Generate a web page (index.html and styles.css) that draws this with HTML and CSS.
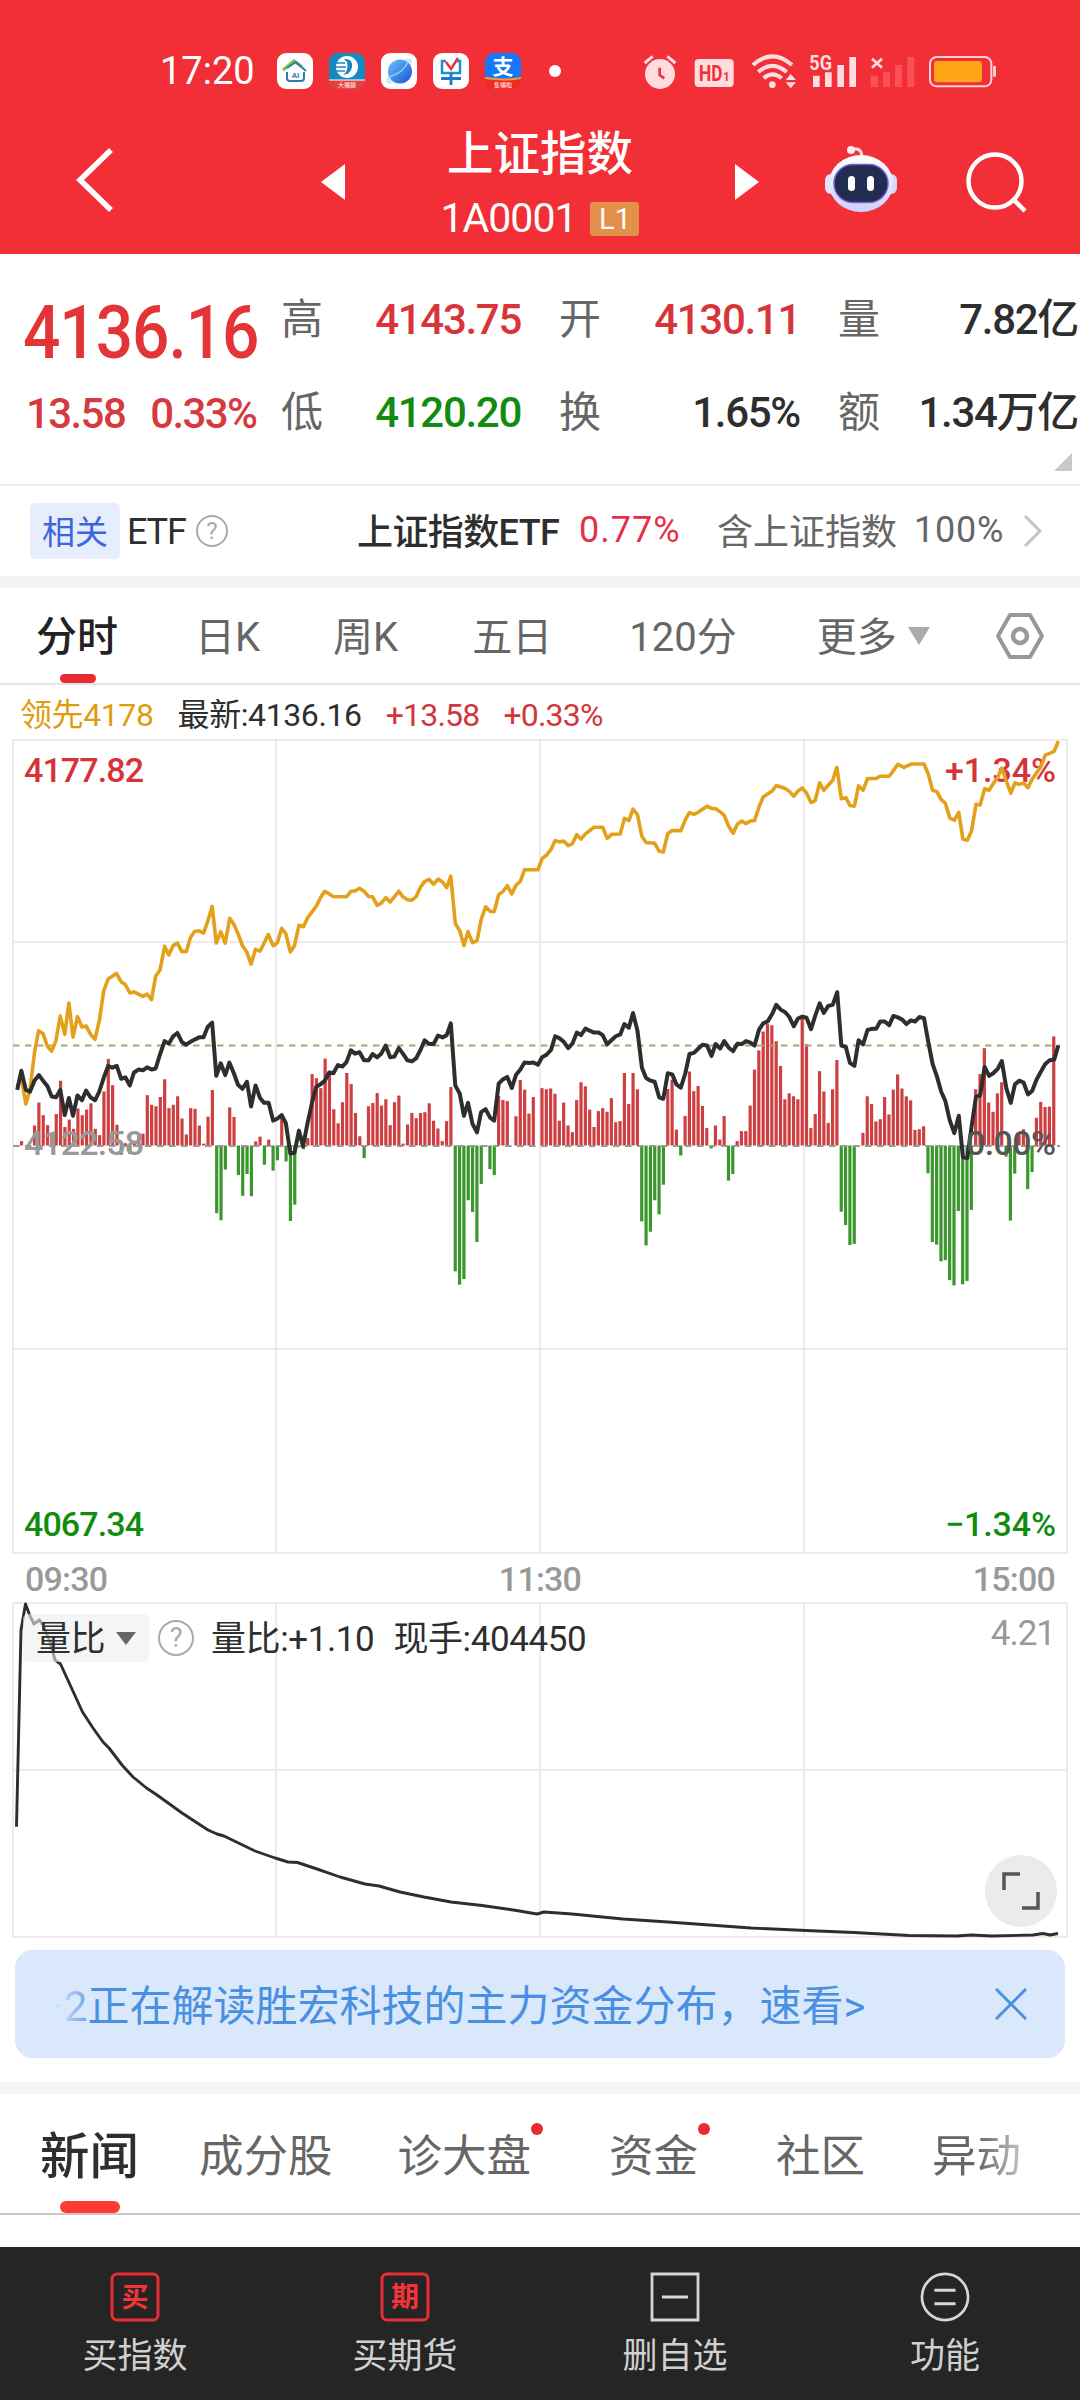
FILE: index.html
```html
<!DOCTYPE html>
<html lang="zh-CN">
<head>
    <meta charset="UTF-8">
    <meta name="viewport" content="width=device-width, initial-scale=1.0">
    <title>上证指数</title>
    <link rel="stylesheet" href="styles.css">
</head>
<body>
    <header class="header">
        <div class="status-bar">
            <span class="clock">17:20</span>
            <div class="apps">
                <svg width="36" height="36" viewBox="0 0 36 36">
                    <rect width="36" height="36" rx="9" fill="#fff"/>
                    <path d="M6 17 L17 8 L25 14" fill="none" stroke="#7cc243" stroke-width="3"/>
                    <path d="M10 15 L19 9 L29 18" fill="none" stroke="#2a7fb8" stroke-width="2"/>
                    <path d="M10 19 V25 Q10 28 13 28 H24 Q27 28 27 25 V19" fill="none" stroke="#2a7fb8" stroke-width="2"/>
                    <text x="18.500" y="25" font-size="8" font-weight="700" text-anchor="middle" fill="#2a7fb8">AI</text>
                </svg>
                <svg width="36" height="36" viewBox="0 0 36 36">
                    <defs><clipPath id="round"><rect width="36" height="36" rx="9"/></clipPath></defs>
                    <g clip-path="url(#round)">
                        <rect width="36" height="36" fill="#1689c0"/>
                        <circle cx="18" cy="14" r="11" fill="#fff"/>
                        <path d="M15 6 Q24 5 23 14 Q22 21 14 22 Q20 18 18 9 Z" fill="#1689c0"/>
                        <path d="M6 10 H16 M5 14 H17 M6 18 H16" stroke="#1689c0" stroke-width="1.300"/>
                        <path d="M0 27 H36 V36 H0 Z" fill="#e8413c"/>
                        <path d="M0 27 H36" stroke="#fff" stroke-width="1"/>
                        <text x="18" y="34" font-size="6" text-anchor="middle" fill="#fff">大福袋</text>
                    </g>
                </svg>
                <svg width="36" height="36" viewBox="0 0 36 36">
                    <defs>
                        <linearGradient id="planet" x1="0" y1="0" x2="1" y2="1">
                            <stop offset="0" stop-color="#6cc4fb"/>
                            <stop offset="1" stop-color="#1553d8"/>
                        </linearGradient>
                    </defs>
                    <rect width="36" height="36" rx="9" fill="#fff"/>
                    <ellipse cx="18" cy="18" rx="17" ry="6" fill="#cfe6fb" transform="rotate(-45 18 18)"/>
                    <circle cx="19" cy="18.500" r="12" fill="url(#planet)"/>
                    <path d="M8 24 Q22 20 27 9" fill="none" stroke="#8fd0ff" stroke-width="1.500"/>
                </svg>
                <svg width="36" height="36" viewBox="0 0 36 36">
                    <rect width="36" height="36" rx="9" fill="#fff"/>
                    <path d="M13 8 H9 V20 H27 V8 H23" fill="none" stroke="#1593cf" stroke-width="2.500"/>
                    <path d="M8 25.500 H28 M18 20 V32" stroke="#1c79c4" stroke-width="2.800"/>
                    <path d="M13 9 L18 16 L25 5" fill="none" stroke="#ea3445" stroke-width="2.500"/>
                </svg>
                <svg width="36" height="36" viewBox="0 0 36 36">
                    <g clip-path="url(#round)">
                        <rect width="36" height="36" fill="#1777fb"/>
                        <text x="18" y="21" font-size="21" font-weight="700" text-anchor="middle" fill="#fff">支</text>
                        <path d="M0 25 Q18 28 36 25 V36 H0 Z" fill="#f22a1c"/>
                        <path d="M0 25 Q18 28 36 25" fill="none" stroke="#f79a3a" stroke-width="2"/>
                        <text x="18" y="34" font-size="6" text-anchor="middle" fill="#fff">集福啦</text>
                    </g>
                </svg>
            </div>
            <span class="more-dot"></span>
            <!-- alarm, HD, wifi, signal x2, battery -->
            <svg class="system" width="360" height="40" viewBox="60 60 1080 120">
                <g fill="#ffdcdd">
                    <circle cx="120" cy="129" r="45"/>
                    <path d="M74 96 L98 76 M166 96 L142 76" stroke="#ffdcdd" stroke-width="9"/>
                    <path d="M119 110 V132 L133 142" fill="none" stroke="#f22f37" stroke-width="8"/>
                    <rect x="224" y="84" width="117" height="84" rx="12"/>
                    <path d="M399 102 Q457 50 516 102 M415 123 Q457 86 500 123 M431 142 Q457 118 485 142" fill="none" stroke="#ffdcdd" stroke-width="12"/>
                    <circle cx="457" cy="161" r="10"/>
                    <path d="M497 147 L512 129 L528 147 Z M497 154 L512 172 L528 154 Z"/>
                    <path d="M579 134 h20 v34 h-20 Z M615 124 h20 v44 h-20 Z M652 102 h20 v66 h-20 Z M688 78 h20 v90 h-20 Z"/>
                    <text class="net" x="568" y="117" font-size="60" textLength="68" lengthAdjust="spacingAndGlyphs">5G</text>
                    <path d="M756 83 L786 110 M786 83 L756 110" stroke="#ffdcdd" stroke-width="8"/>
                </g>
                <path d="M752 134 h22 v34 h-22 Z M789 124 h21 v44 h-21 Z M825 102 h21 v66 h-21 Z M862 78 h21 v90 h-21 Z" fill="#fa5158"/>
                <text class="net" x="237" y="150" font-size="66" fill="#f22f37" textLength="70" lengthAdjust="spacingAndGlyphs">HD</text>
                <text class="net" x="309" y="150" font-size="40" fill="#f22f37" textLength="20" lengthAdjust="spacingAndGlyphs">1</text>
                <rect x="930" y="78" width="184" height="88" rx="20" fill="none" stroke="#ffd0d2" stroke-width="6"/>
                <rect x="942" y="90" width="144" height="64" rx="10" fill="#ffa516"/>
                <rect x="1119" y="104" width="9" height="34" rx="4" fill="#ffd0d2"/>
            </svg>
        </div>
        <div class="nav">
            <svg class="back" width="40" height="66" viewBox="0 0 40 66"><path d="M36 3 L5 33 L36 63" fill="none" stroke="#fff" stroke-width="5.500"/></svg>
            <svg width="24" height="36" viewBox="0 0 24 36"><path d="M24 0 V36 L0 18 Z" fill="#fff"/></svg>
            <div class="title">
                <h1>上证指数</h1>
                <div class="code"><span>1A0001</span><span class="level">L1</span></div>
            </div>
            <svg width="24" height="36" viewBox="0 0 24 36"><path d="M0 0 V36 L24 18 Z" fill="#fff"/></svg>
            <svg class="robot" width="72" height="68" viewBox="0 0 72 68">
                <defs>
                    <linearGradient id="head" x1="0" y1="0" x2="0" y2="1">
                        <stop offset="0" stop-color="#fff"/>
                        <stop offset="1" stop-color="#ccd0fa"/>
                    </linearGradient>
                </defs>
                <path d="M26 5 Q37 1 37 13" fill="none" stroke="#fbe3ee" stroke-width="3"/>
                <circle cx="26" cy="5" r="4" fill="#fde9ef"/>
                <rect x="0" y="29" width="12" height="20" rx="6" fill="#e2e3fb"/>
                <rect x="60" y="29" width="12" height="20" rx="6" fill="#d9dafb"/>
                <ellipse cx="36" cy="38.500" rx="32" ry="28.500" fill="url(#head)"/>
                <rect x="9" y="19.500" width="54" height="38" rx="19" fill="#202c50" stroke="#7a5ccb" stroke-width="1.500"/>
                <rect x="23" y="31" width="7" height="15" rx="3.500" fill="#fff"/>
                <rect x="42" y="31" width="7" height="15" rx="3.500" fill="#fff"/>
            </svg>
            <svg class="search" width="62" height="62" viewBox="0 0 62 62"><circle cx="29" cy="30" r="26.500" fill="none" stroke="#fff" stroke-width="4.500"/><path d="M48 49 L59 60" stroke="#fff" stroke-width="4.500"/></svg>
        </div>
    </header>

    <section class="quote">
        <div class="price">
            <div class="last">4136.16</div>
            <div class="change"><span>13.58</span><span>0.33%</span></div>
        </div>
        <div class="stats">
            <div class="stat"><label>高</label><b class="up">4143.75</b></div>
            <div class="stat"><label>开</label><b class="up">4130.11</b></div>
            <div class="stat"><label>量</label><b>7.82亿</b></div>
            <div class="stat"><label>低</label><b class="down">4120.20</b></div>
            <div class="stat"><label>换</label><b>1.65%</b></div>
            <div class="stat"><label>额</label><b>1.34万亿</b></div>
        </div>
        <span class="corner"></span>
    </section>

    <section class="etf">
        <span class="tag">相关</span>
        <span class="etf-word">ETF</span>
        <span class="help">?</span>
        <span class="etf-name">上证指数ETF</span>
        <span class="etf-rate">0.77%</span>
        <span class="etf-has">含上证指数</span>
        <span class="etf-pct">100%</span>
        <svg class="etf-arrow" width="20" height="34" viewBox="0 0 20 34"><path d="M2 2 L17 17 L2 32" fill="none" stroke="#c4c4c4" stroke-width="3"/></svg>
    </section>

    <nav class="periods">
        <span class="active">分时</span>
        <span>日K</span>
        <span class="week">周K</span>
        <span class="five">五日</span>
        <span>120分</span>
        <span class="more">更多<i></i></span>
        <svg class="gear" width="50" height="48" viewBox="0 0 50 48"><path d="M15 3 H35 L47 24 L35 45 H15 L3 24 Z" fill="none" stroke="#999" stroke-width="4" stroke-linejoin="round"/><circle cx="25" cy="24" r="7" fill="none" stroke="#999" stroke-width="4.500"/></svg>
    </nav>

    <div class="legend">
        <span class="lead">领先4178</span>
        <span class="now">最新:4136.16</span>
        <span class="diff">+13.58</span>
        <span class="diff">+0.33%</span>
    </div>

    <svg class="chart" width="1080" height="816" viewBox="0 0 1080 816">
        <path class="grid" d="M13 1 H1067 V814 H13 Z M13 203 H1067 M13 610 H1067 M276 1 V814 M540 1 V814 M804 1 V814"/>
        <g id="bars"></g>
        <path d="M13 306.500 H1060" stroke="#b5a36f" stroke-width="1.800" stroke-dasharray="6.500 5.500"/>
        <path d="M13 407 H1060" stroke="#999" stroke-width="1.800" stroke-dasharray="6.500 5.500"/>
        <g class="labels">
            <text x="24" y="43" fill="#d63338" textLength="120">4177.82</text>
            <text x="945" y="43" fill="#d63338" textLength="111">+1.34%</text>
            <text x="24" y="416" fill="#999" textLength="120">4122.58</text>
            <text x="24" y="797" fill="#118c11" textLength="120">4067.34</text>
            <text x="945" y="797" fill="#118c11" textLength="111">−1.34%</text>
        </g>
        <g transform="translate(0 -19) scale(.34439 .3699)">
            <polyline class="line lead-line" points="50,990 62,965 75,1038 87,1000 100,900 112,840 125,848 138,883 150,895 162,868 175,800 188,850 200,765 212,857 225,802 238,830 250,827 263,850 276,863 289,810 301,733 314,700 338,685 352,708 364,715 377,738 389,735 415,747 427,741 440,756 452,693 465,675 478,612 490,635 503,610 515,603 528,626 541,626 553,588 565,572 578,570 591,576 603,545 616,504 628,603 641,572 654,603 667,536 679,552 692,580 704,610 717,628 729,660 742,620 755,625 779,580 793,610 805,603 818,563 830,578 843,627 855,610 868,555 881,559 893,535 918,504 931,480 943,463 968,477 1006,478 1019,463 1031,462 1044,455 1057,463 1070,477 1082,478 1095,501 1107,495 1120,480 1133,492 1158,463 1170,478 1183,486 1196,487 1208,478 1221,452 1233,437 1246,431 1259,444 1272,430 1285,438 1297,453 1309,422 1322,550 1335,570 1347,610 1359,572 1372,602 1385,597 1397,540 1410,505 1423,517 1435,518 1448,472 1460,464 1473,448 1486,470 1498,447 1511,436 1523,405 1562,405 1574,375 1587,365 1600,350 1612,326 1625,330 1637,327 1650,340 1662,334 1675,310 1687,322 1700,308 1725,290 1750,290 1763,320 1776,309 1801,308 1813,266 1826,272 1838,241 1851,256 1864,315 1876,331 1901,333 1914,355 1926,357 1939,307 1952,299 1977,299 1990,270 2002,250 2015,255 2028,249 2053,233 2066,239 2078,240 2091,248 2103,258 2116,288 2129,306 2141,282 2154,273 2166,280 2179,273 2191,272 2204,235 2216,208 2242,192 2254,177 2280,185 2292,193 2305,206 2317,192 2330,184 2342,198 2355,223 2367,218 2380,170 2392,190 2418,163 2430,128 2443,213 2456,210 2468,231 2481,233 2493,178 2506,190 2519,158 2544,158 2556,152 2582,152 2594,137 2607,120 2625,128 2645,119 2683,119 2695,145 2708,190 2720,193 2733,215 2745,225 2758,265 2771,271 2784,250 2796,322 2809,325 2821,300 2834,228 2846,230 2859,186 2872,190 2884,172 2897,155 2909,130 2922,165 2935,198 2947,170 2960,174 2972,170 2985,183 2997,160 3023,125 3035,95 3048,90 3061,85 3073,57"/>
            <polyline class="line index-line" points="50,1000 62,948 75,1000 87,1005 100,975 113,960 125,975 138,990 150,1018 163,1020 175,1000 188,1068 200,1022 212,1070 225,1015 238,1028 250,1002 263,1020 276,1028 288,1005 301,968 314,935 326,940 339,935 352,970 364,966 377,988 389,953 402,945 415,947 427,939 440,945 452,942 465,903 478,868 490,875 503,855 515,846 528,870 540,878 553,870 578,858 591,858 603,830 616,818 628,962 641,928 654,960 666,926 679,955 691,986 704,997 717,978 729,1045 742,988 755,1022 767,1035 780,1035 793,1083 805,1078 818,1068 830,1090 843,1172 855,1170 868,1110 880,1152 893,1090 906,1035 918,992 931,985 943,975 956,953 968,955 981,933 994,937 1006,925 1019,893 1031,902 1044,898 1057,920 1070,920 1082,903 1095,912 1107,902 1120,880 1133,912 1145,910 1158,887 1170,902 1183,920 1196,923 1208,915 1221,892 1233,866 1246,876 1259,876 1272,853 1285,858 1297,852 1309,820 1322,988 1335,1010 1347,1070 1359,1035 1372,1092 1385,1115 1397,1060 1410,1052 1423,1075 1435,1083 1448,983 1460,972 1473,965 1486,995 1498,960 1511,945 1523,926 1536,927 1549,926 1562,932 1574,912 1587,905 1600,892 1612,855 1624,860 1637,870 1650,887 1662,875 1675,845 1687,852 1700,834 1712,840 1725,845 1738,845 1750,852 1763,877 1776,865 1788,855 1801,850 1813,822 1826,832 1838,792 1851,840 1864,940 1876,968 1889,975 1901,978 1914,1020 1926,1024 1939,955 1952,958 1964,985 1977,994 1990,955 2002,903 2015,900 2028,888 2040,878 2053,880 2066,908 2078,876 2091,888 2103,868 2116,886 2129,895 2141,875 2154,876 2166,868 2179,872 2191,880 2204,837 2216,820 2229,815 2242,795 2254,770 2267,783 2280,790 2292,803 2305,828 2317,807 2330,802 2342,805 2355,836 2367,800 2380,766 2392,792 2405,773 2418,770 2431,736 2443,880 2456,884 2468,927 2481,935 2493,866 2506,877 2519,838 2531,835 2544,835 2556,815 2569,815 2582,825 2594,800 2607,804 2620,810 2632,822 2645,812 2657,815 2670,803 2683,806 2695,868 2708,930 2720,962 2733,1005 2745,1030 2758,1083 2771,1117 2784,1070 2796,1182 2809,1184 2821,1100 2834,1018 2846,1015 2859,938 2872,962 2884,955 2897,943 2909,922 2922,995 2935,1035 2947,985 2960,975 2972,980 2985,1012 2997,1003 3010,972 3023,950 3035,930 3048,920 3061,918 3073,880"/>
        </g>
        <text class="labels" x="966" y="416" fill="#555" textLength="90">0.00%</text>
    </svg>

    <div class="times"><span>09:30</span><span>11:30</span><span>15:00</span></div>

    <div class="volume">
        <svg class="chart" width="1080" height="337" viewBox="0 0 1080 337">
            <path class="grid" d="M13 1 H1067 V335 H13 Z M13 168 H1067 M276 1 V335 M540 1 V335 M804 1 V335"/>
            <polyline class="ratio-line" points="16.5,224.7 21,28 25.5,2 30,14 34,22 39.5,18 44,25 50,40 55,58 60.5,62 71.5,86 82.5,110 93,126 103,140 109,146 122,163 133,175 146.5,186 157,193 182,211 208,228 217,232 224,234 255,249 275,256 288,260 297.5,260.5 317,267 340,275 365,282 379,284 400,290 424,295 451,300 482,303.500 516.5,308.5 537,312 544,310 572,312 623,317 668,320 751,326 806,328.500 854,330.500 909,333.500 957,334 971,333 992,334 1033,333 1043,331.500 1050,333 1058,331.500"/>
        </svg>
        <div class="volume-head">
            <span class="chip">量比<i></i></span>
            <span class="help">?</span>
            <span class="info">量比:+1.10</span>
            <span class="info hand">现手:404450</span>
            <span class="max">4.21</span>
        </div>
        <div class="expand"><svg width="38" height="38" viewBox="0 0 38 38"><path d="M2 18 V2 H18 M36 20 V36 H20" fill="none" stroke="#555" stroke-width="3.500"/></svg></div>
    </div>

    <div class="banner">
        <span class="banner-text"><span class="passed">·2</span>正在解读胜宏科技的主力资金分布，速看&gt;</span>
        <svg width="32" height="32" viewBox="0 0 32 32"><path d="M1 1 L31 31 M31 1 L1 31" stroke="#4a90e2" stroke-width="3"/></svg>
    </div>

    <nav class="news">
        <span class="active">新闻</span>
        <span>成分股</span>
        <span class="dot">诊大盘</span>
        <span class="dot">资金</span>
        <span>社区</span>
        <span class="fade">异动</span>
    </nav>

    <footer class="toolbar">
        <div class="tool">
            <svg width="50" height="50" viewBox="0 0 50 50"><rect x="2" y="2" width="46" height="46" rx="5" fill="none" stroke="#e92e34" stroke-width="3"/><text x="25" y="35" font-size="27" font-weight="700" text-anchor="middle" fill="#f4333a">买</text></svg>
            <span>买指数</span>
        </div>
        <div class="tool">
            <svg width="50" height="50" viewBox="0 0 50 50"><rect x="2" y="2" width="46" height="46" rx="5" fill="none" stroke="#e92e34" stroke-width="3"/><text x="25" y="35" font-size="28" font-weight="700" text-anchor="middle" fill="#f4333a">期</text></svg>
            <span>买期货</span>
        </div>
        <div class="tool">
            <svg width="50" height="50" viewBox="0 0 50 50"><path d="M2 2 H48 V48 H2 Z M12 25 H38" fill="none" stroke="#d6d6d6" stroke-width="2.800"/></svg>
            <span>删自选</span>
        </div>
        <div class="tool">
            <svg width="52" height="52" viewBox="0 0 52 52"><circle cx="26" cy="26" r="24" fill="none" stroke="#d6d6d6" stroke-width="2.800"/><path d="M15 19 H37 M15 33 H37" stroke="#d6d6d6" stroke-width="3"/></svg>
            <span>功能</span>
        </div>
    </footer>

    <script>
        // one value per minute, positive = red, negative = green
        const momentum = [0, 12, 0, 0, 54, 116, 82, 55, 35, 85, 175, 50, 70, 45, 100, 82, 97, 114, 45, 28,
            146, 234, 163, 56, -25, 6, -23, 8, 25, 32, 136, 110, 106, 131, 179, 101, 110, 133, 73, 30,
            101, 99, 54, 5, 78, 150, -183, -202, -65, 103, 77, -80, -136, -77, -137, 11, 24, -52, 16, -68,
            -40, 75, -43, -204, -160, -5, -10, 20, 193, 182, 155, 235, 200, 98, 60, 117, 196, 166, 88, 25,
            -34, 106, 115, 142, 108, 125, 55, 117, 135, 5, 57, 88, 74, 88, 90, 114, 67, 46, 12, 66,
            158, -340, -376, -361, -148, -180, -261, -104, -4, -64, -80, 134, 123, 120, 0, 79, 177, 151, 86, 131,
            0, 155, 152, 154, 140, 67, 116, 54, 36, 123, 171, 160, 97, 50, 93, 101, 91, 128, 63, 66,
            196, 112, 196, 152, -205, -270, -233, -148, -186, -106, 153, 178, 43, -27, 80, 200, 147, 161, 107, 47,
            -8, 54, 16, 80, -95, -77, 12, 39, 39, 108, 205, 257, 308, 328, 325, 282, 215, 125, 141, 133,
            125, 353, 274, 47, 85, 201, 146, 61, 152, 231, -179, -215, -269, -266, -3, 34, 133, 112, 65, 71,
            131, 84, 151, 192, 154, 133, 122, 42, 44, 52, -75, -261, -268, -313, -310, -364, -378, -177, -375, -366,
            -174, 152, 193, 263, 116, 91, 141, 171, -30, -203, -76, 28, 44, -118, -72, 75, 118, 104, 105, 295, 0];
        const bars = document.getElementById("bars");

        momentum.forEach((value, i) => {
            if (!value) return;
            const height = Math.abs(value) * 0.37;
            const bar = document.createElementNS("http://www.w3.org/2000/svg", "rect");
            bar.setAttribute("x", 15.6 + i * 4.337);
            bar.setAttribute("y", value > 0 ? 406.5 - height : 406.5);
            bar.setAttribute("width", 3.2);
            bar.setAttribute("height", height);
            bar.setAttribute("fill", value > 0 ? "#ce3f42" : "#3b962d");
            bars.appendChild(bar);
        });
    </script>
</body>
</html>
```

FILE: styles.css
```css
* {
    box-sizing: border-box;
}
body {
    margin: 0;
    width: 1080px;
    height: 2400px;
    overflow: hidden;
    display: flex;
    flex-direction: column;
    font-family: Roboto, "Noto Sans CJK SC", sans-serif;
    line-height: 1.2;
    color: #2e2e2e;
    background-color: #fff;
}
body > * {
    flex-shrink: 0;
}
svg {
    display: block;
    flex-shrink: 0;
}
span, b, label {
    flex-shrink: 0;
    white-space: nowrap;
}

/* header */
.header {
    height: 254px;
    background-color: #f22f37;
    color: #fff;
}
.status-bar {
    height: 110px;
    padding: 32px 0 0 160px;
    display: flex;
    align-items: center;
}
.clock {
    width: 117px;
    padding-top: 2px;
    font-size: 38px;
}
.apps {
    display: flex;
    gap: 16px;
}
.more-dot {
    width: 12px;
    height: 12px;
    margin-left: 28px;
    border-radius: 50%;
    background-color: #fff;
}
.system {
    margin-left: 79px;
}
.net {
    font-weight: 700;
}
.nav {
    height: 144px;
    padding-left: 75px;
    display: flex;
    align-items: center;
}
.back {
    margin-right: 206px;
    margin-top: -4px;
}
.title {
    width: 390px;
    height: 144px;
    text-align: center;
}
.title h1 {
    margin: 12px 0 0;
    font-size: 46.5px;
    line-height: 64px;
    font-weight: 500;
}
.code {
    display: flex;
    justify-content: center;
    align-items: center;
    gap: 14px;
    height: 66px;
    font-size: 41px;
    letter-spacing: -1px;
}
.level {
    width: 49px;
    height: 34px;
    line-height: 35px;
    border-radius: 3px;
    font-size: 29px;
    letter-spacing: 0;
    background-color: #e2904a;
}
.robot {
    margin: -6px 69px 0 66px;
}

/* quote */
.quote {
    position: relative;
    height: 232px;
    display: flex;
    border-bottom: 2px solid #ececec;
}
.price {
    width: 281px;
    padding: 38px 0 0 23px;
    color: #e33437;
}
.last {
    height: 82px;
    line-height: 82px;
    font-size: 74px;
    font-weight: 500;
    letter-spacing: -1.2px;
    transform: scaleX(0.89);
    transform-origin: left;
}
.change {
    display: flex;
    gap: 25px;
    padding-left: 3px;
    margin-top: 15px;
    line-height: 50px;
    font-size: 42px;
    font-weight: 500;
    letter-spacing: -1.6px;
    color: #d63a3e;
}
.stats {
    width: 799px;
    height: 186px;
    margin-top: 20px;
    display: grid;
    grid-template-columns: 240px 241px 240px;
    grid-template-rows: 93px 93px;
    column-gap: 38px;
}
.stat {
    display: flex;
    justify-content: space-between;
    align-items: center;
    font-size: 42px;
}
.stat label {
    color: #666;
}
.stat b {
    font-weight: 500;
    letter-spacing: -1.3px;
}
.stat .up {
    color: #d8353a;
}
.stat .down {
    color: #118c11;
}
.corner {
    position: absolute;
    right: 8px;
    bottom: 13px;
    border-left: 18px solid transparent;
    border-bottom: 18px solid #c8c8c8;
}

/* etf */
.etf {
    height: 90px;
    padding-left: 30px;
    display: flex;
    align-items: center;
    font-size: 36px;
}
.tag {
    width: 90px;
    height: 56px;
    line-height: 60px;
    text-align: center;
    font-size: 33px;
    border-radius: 5px;
    color: #3c66e0;
    background-color: #e6edfc;
}
.etf-word {
    width: 76px;
    padding: 3px 0 0 7px;
    letter-spacing: -1.2px;
}
.help {
    width: 32px;
    height: 32px;
    line-height: 29px;
    border: 2px solid #aaa;
    border-radius: 50%;
    text-align: center;
    font-size: 24px;
    color: #aaa;
}
.etf-name {
    width: 222px;
    padding-top: 5px;
    margin-left: 129px;
    font-weight: 500;
    letter-spacing: -0.6px;
}
.etf-rate {
    width: 138px;
    color: #e5304c;
    letter-spacing: 1px;
}
.etf-has {
    width: 197px;
    padding-top: 5px;
    color: #666;
}
.etf-pct {
    width: 109px;
    color: #666;
    letter-spacing: 0.8px;
}

/* period tabs */
.periods {
    position: relative;
    height: 109px;
    padding: 5px 36px 0;
    display: flex;
    align-items: center;
    gap: 77px;
    border-top: 12px solid #f4f4f4;
    border-bottom: 2px solid #e4e4e4;
    font-size: 40px;
    color: #666;
}
.periods .active {
    font-size: 41px;
    color: #222;
    font-weight: 500;
}
.periods .active::after {
    content: "";
    position: absolute;
    left: 60px;
    bottom: 0;
    width: 36px;
    height: 9px;
    border-radius: 5px;
    background-color: #e62c30;
}
.periods .week {
    margin-left: -4px;
}
.periods .five {
    margin-left: -3px;
}
.more {
    display: flex;
    align-items: center;
    margin-left: 3px;
}
.more i {
    margin: -5px 0 0 11px;
    border: 11px solid transparent;
    border-top: 18px solid #aaa;
    border-bottom: 0;
}
.gear {
    margin: -5px 0 0 -12px;
}

/* main chart */
.legend {
    height: 54px;
    padding: 7px 0 0 20px;
    display: flex;
    align-items: center;
    gap: 24px;
    font-size: 32px;
    letter-spacing: -0.4px;
}
.lead {
    color: #e09c10;
}
.diff {
    letter-spacing: -0.8px;
    color: #d0363a;
}
.grid {
    fill: none;
    stroke: #e6e6e6;
    stroke-width: 1.5;
}
.labels {
    font-size: 34px;
    font-weight: 500;
}
.line {
    fill: none;
    stroke-width: 3.6;
    stroke-linejoin: round;
    vector-effect: non-scaling-stroke;
}
.lead-line {
    stroke: #e3a01a;
}
.index-line {
    stroke: #2e2e2e;
    stroke-width: 4;
}
.times {
    height: 47px;
    padding: 2px 25px 0;
    display: flex;
    justify-content: space-between;
    align-items: center;
    font-size: 34px;
    font-weight: 500;
    letter-spacing: -0.8px;
    color: #999;
}

/* volume ratio */
.volume {
    position: relative;
    height: 348px;
}
.ratio-line {
    fill: none;
    stroke: #2e2e2e;
    stroke-width: 2.9;
    stroke-linejoin: round;
}
.volume-head {
    position: absolute;
    top: 12px;
    left: 23px;
    right: 25px;
    display: flex;
    align-items: center;
    height: 48px;
    font-size: 35px;
    letter-spacing: -0.4px;
}
.chip {
    width: 126px;
    height: 48px;
    line-height: 50px;
    padding: 3px 0 0 13px;
    display: flex;
    align-items: center;
    border-radius: 5px;
    background-color: rgba(238, 238, 238, 0.6);
}
.chip i {
    margin: -3px 0 0 11px;
    border: 10px solid transparent;
    border-top: 13px solid #666;
    border-bottom: 0;
}
.volume-head .help {
    width: 36px;
    height: 36px;
    line-height: 33px;
    margin: 0 17px 0 9px;
    font-size: 27px;
}
.info {
    padding-top: 4px;
}
.hand {
    margin-left: 19px;
}
.volume-head .max {
    margin: -8px 0 0 auto;
    letter-spacing: -1px;
    color: #999;
}
.expand {
    position: absolute;
    left: 985px;
    top: 253px;
    width: 72px;
    height: 72px;
    display: flex;
    justify-content: center;
    align-items: center;
    border-radius: 50%;
    background-color: #ebebeb;
}

/* banner */
.banner {
    height: 108px;
    margin: 0 15px 24px;
    padding: 0 38px;
    display: flex;
    align-items: center;
    justify-content: space-between;
    border-radius: 18px;
    background-color: #dae8fb;
    color: #4a90e2;
    font-size: 42px;
}
.banner-text {
    padding-top: 6px;
}
.passed {
    color: transparent;
    background: linear-gradient(to right, rgba(74, 144, 226, 0.1) 20%, rgba(74, 144, 226, 0.75));
    -webkit-background-clip: text;
    background-clip: text;
}

/* news tabs */
.news {
    position: relative;
    height: 133px;
    padding: 9px 0 0 40px;
    display: flex;
    align-items: center;
    border-top: 12px solid #f4f4f4;
    border-bottom: 2px solid #c8c8c8;
    font-size: 44.5px;
    color: #666;
}
.news span {
    position: relative;
    margin-left: 78px;
}
.news .active {
    margin-left: 0;
    font-size: 49.5px;
    font-weight: 500;
    color: #2e2e2e;
    position: static;
}
.news .active::after {
    content: "";
    position: absolute;
    left: 60px;
    bottom: 0;
    width: 60px;
    height: 12px;
    border-radius: 6px;
    background-color: #fe3a33;
}
.news .active + span {
    margin-left: 60px;
}
.news .active + span + span {
    margin-left: 65px;
}
.news .dot::after {
    content: "";
    position: absolute;
    top: -8px;
    right: -12px;
    width: 12px;
    height: 12px;
    border-radius: 50%;
    background-color: #e62c30;
}
.news .fade {
    margin-left: 67px;
    -webkit-mask-image: linear-gradient(to right, #000 50%, rgba(0, 0, 0, 0.4));
    mask-image: linear-gradient(to right, #000 50%, rgba(0, 0, 0, 0.4));
}

/* bottom toolbar */
.toolbar {
    height: 153px;
    margin-top: auto;
    display: flex;
    background-color: #252525;
}
.tool {
    flex: 1;
    padding-top: 25px;
    display: flex;
    flex-direction: column;
    align-items: center;
    font-size: 35px;
    color: #d0d0d0;
}
.tool svg {
    height: 50px;
}
.tool span {
    margin-top: 9px;
    line-height: 52px;
}
```
